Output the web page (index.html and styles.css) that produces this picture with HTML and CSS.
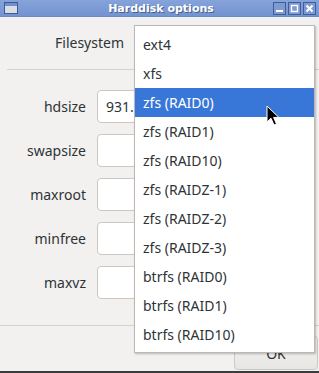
FILE: index.html
```html
<!DOCTYPE html>
<html lang="en">
<head>
    <meta charset="UTF-8">
    <title>Harddisk options</title>
    <link rel="stylesheet" href="styles.css">
</head>
<body>
    <div class="window">
        <!-- Title bar -->
        <div class="titlebar">
            <svg class="win-icon" width="14" height="12" viewBox="0 0 14 12">
                <rect x="0.5" y="0.5" width="13" height="11" fill="#d9dde4" stroke="#3c5a94"/>
                <rect x="1" y="1" width="12" height="3" fill="#6f8fcf"/>
            </svg>
            <span class="title">Harddisk options</span>
            <div class="wm-buttons">
                <span class="wm-btn">
                    <svg width="13" height="13" viewBox="0 0 13 13"><rect x="3" y="8" width="7" height="2" fill="#fff"/></svg>
                </span>
                <span class="wm-btn">
                    <svg width="13" height="13" viewBox="0 0 13 13"><rect x="3.5" y="3.5" width="6" height="6" fill="none" stroke="#fff" stroke-width="1.4"/></svg>
                </span>
                <span class="wm-btn">
                    <svg width="13" height="13" viewBox="0 0 13 13"><path d="M3.5 3.5 L9.5 9.5 M9.5 3.5 L3.5 9.5" stroke="#fff" stroke-width="2"/></svg>
                </span>
            </div>
        </div>

        <div class="content">
            <div class="fs-row">
                <label class="fs-label">Filesystem</label>
                <div class="combo"></div> <!-- covered by the open popup -->
            </div>
            <div class="separator top-sep"></div>

            <div class="fields">
                <label>hdsize</label>
                <input type="text" value="931.0">
                <label>swapsize</label>
                <input type="text">
                <label>maxroot</label>
                <input type="text">
                <label>minfree</label>
                <input type="text">
                <label>maxvz</label>
                <input type="text">
            </div>

            <div class="separator bottom-sep"></div>
            <div class="actions">
                <button class="ok">OK</button>
            </div>
        </div>

        <!-- Open combo popup -->
        <ul class="popup">
            <li>ext4</li>
            <li>xfs</li>
            <li class="active">zfs (RAID0)</li>
            <li>zfs (RAID1)</li>
            <li>zfs (RAID10)</li>
            <li>zfs (RAIDZ-1)</li>
            <li>zfs (RAIDZ-2)</li>
            <li>zfs (RAIDZ-3)</li>
            <li>btrfs (RAID0)</li>
            <li>btrfs (RAID1)</li>
            <li>btrfs (RAID10)</li>
        </ul>

        <svg class="cursor" width="14" height="22" viewBox="0 0 14 22">
            <path d="M1 1 L1 17 L5 13.2 L8 20 L10.5 19 L7.6 12.4 L12.8 12.4 Z" fill="#000" stroke="#fff" stroke-width="1"/>
        </svg>
    </div>
</body>
</html>
```

FILE: styles.css
```css
body {
    margin: 0;
    font-family: "Noto Sans", sans-serif;
    background-color: #f2f1f0;
}

.window {
    position: relative;
    width: 319px;
    height: 371px;
    background-color: #f2f1f0;
    border-bottom: 2px solid #3b3b3b;
    overflow: hidden;
    color: #2e3436;
    font-size: 14px;
}

.titlebar {
    height: 17px;
    display: flex;
    align-items: center;
    padding: 0 3px 0 4px;
    background: linear-gradient(#86a3da, #7393d0);
    border-bottom: 1px solid #6a8ac9;
    box-sizing: border-box;
}

.win-icon {
    display: block;
}

.title {
    flex: 1;
    text-align: center;
    color: #fff;
    font-family: "DejaVu Sans", sans-serif;
    font-weight: bold;
    font-size: 11px;
    text-shadow: 1px 1px 0 #4a5f8a;
    margin-left: 31px;
}

.wm-buttons {
    display: flex;
    gap: 2px;
}

.wm-btn {
    width: 13px;
    height: 13px;
    box-sizing: border-box;
    border: 1px solid #3f5d99;
    background: #7d9ad3;
    display: flex;
}

.wm-btn svg {
    margin: -1px;
}

.content {
    padding-top: 8px;
}

.fs-row {
    display: flex;
    align-items: center;
    height: 35px;
    gap: 11px;
}

.fs-label {
    width: 124px;
    text-align: right;
}

.combo {
    width: 180px;
    height: 33px;
    border: 1px solid #cdc7c2;
    border-radius: 3px;
    background: #fff;
    box-sizing: border-box;
}

.separator {
    height: 1px;
    background-color: #d6d1cd;
}

.top-sep {
    margin: 9px 0 0 7px;
}

.fields {
    margin-top: 20px;
    display: grid;
    grid-template-columns: 86px 1fr;
    grid-auto-rows: 33px;
    column-gap: 11px;
    row-gap: 11px;
    align-items: center;
    padding-right: 8px;
}

.fields label {
    text-align: right;
}

.fields input {
    height: 33px;
    box-sizing: border-box;
    border: 1px solid #cdc7c2;
    border-radius: 4px;
    background: #fff;
    font-family: "Noto Sans", sans-serif;
    font-size: 14px;
    color: #2e3436;
    padding: 0 8px;
    width: 100%;
}

.bottom-sep {
    margin-top: 26px;
}

.actions {
    display: flex;
    justify-content: flex-end;
    padding: 10px 1px 0 0;
}

.ok {
    width: 84px;
    height: 34px;
    border: 1px solid #cdc7c2;
    border-radius: 4px;
    background: linear-gradient(#f4f3f2, #e8e6e4);
    font-family: "Noto Sans", sans-serif;
    font-size: 14px;
    color: #2e3436;
}

.popup {
    position: absolute;
    left: 134px;
    top: 25px;
    width: 181px;
    height: 328px;
    margin: 0;
    padding: 4px 0 0;
    list-style: none;
    box-sizing: border-box;
    background: #fff;
    border: 1px solid #bdb8b3;
    box-shadow: 1px 1px 2px rgba(0, 0, 0, 0.25);
}

.popup li {
    height: 29px;
    line-height: 29px;
    padding-left: 8px;
    color: #2e3436;
}

.popup li.active {
    background-color: #3877d8;
    color: #fff;
}

.cursor {
    position: absolute;
    left: 266px;
    top: 105px;
}
```
